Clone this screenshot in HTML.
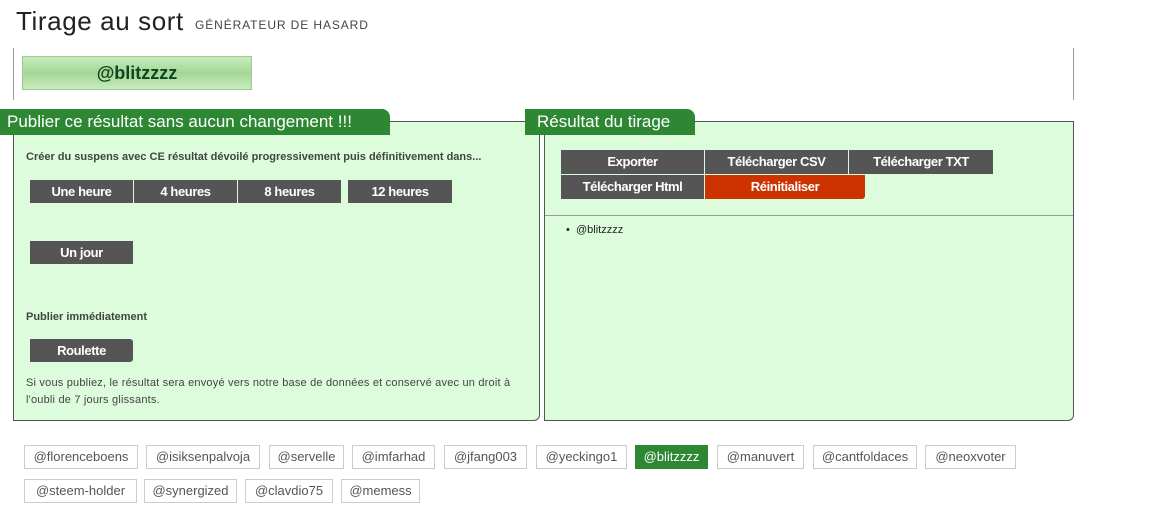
<!DOCTYPE html>
<html><head><meta charset="utf-8"><style>
*{box-sizing:border-box;margin:0;padding:0}
body{width:1163px;height:509px;background:#fff;position:relative;font-family:"Liberation Sans",sans-serif;overflow:hidden}
.a{position:absolute}
.btn{position:absolute;background:#555;color:#fff;font-size:13px;font-weight:bold;letter-spacing:-0.4px;text-align:center;line-height:23px;height:23px}
.tab{position:absolute;background:#2e8833;color:#fff;font-size:17px;line-height:26px;height:26px;padding-left:7px;border-radius:0 8px 0 0}
.box{position:absolute;background:#dcfcdc;border:1px solid #555;border-radius:0 0 6px 0}
.t{position:absolute;font-size:11px;color:#444}
.tag{position:absolute;height:24px;border:1px solid #ccc;font-size:13px;color:#555;text-align:center;line-height:22px;background:#fff}
</style></head><body>
<div class="a" style="left:16px;top:6px;font-size:26px;color:#222;letter-spacing:0.6px">Tirage au sort</div>
<div class="a" style="left:195px;top:18px;font-size:12px;color:#444;letter-spacing:0.9px">GÉNÉRATEUR DE HASARD</div>
<div class="a" style="left:13px;top:48px;width:1px;height:52px;background:#999"></div>
<div class="a" style="left:1073px;top:48px;width:1px;height:52px;background:#999"></div>
<div class="a" style="left:22px;top:56px;width:230px;height:34px;background:linear-gradient(#c8ecbc,#a4d696,#c8ecbc);border:1px solid #9c9;text-align:center;font-weight:bold;font-size:18px;line-height:32px;color:#142">@blitzzzz</div>

<div class="box" style="left:13px;top:121px;width:527px;height:300px"></div>
<div class="tab" style="left:0;top:109px;width:390px">Publier ce résultat sans aucun changement !!!</div>
<div class="a" style="left:389px;top:121px;width:140px;height:1px;background:#555"></div>
<div class="t" style="left:26px;top:151px;font-weight:bold">Créer du suspens avec CE résultat dévoilé progressivement puis définitivement dans...</div>
<div class="btn" style="left:30px;top:180px;width:103px">Une heure</div>
<div class="btn" style="left:134px;top:180px;width:103px">4 heures</div>
<div class="btn" style="left:238px;top:180px;width:103px">8 heures</div>
<div class="btn" style="left:348px;top:180px;width:104px">12 heures</div>
<div class="btn" style="left:30px;top:241px;width:103px">Un jour</div>
<div class="t" style="left:26px;top:311px;font-weight:bold">Publier immédiatement</div>
<div class="btn" style="left:30px;top:339px;width:103px;border-radius:0 3px 3px 0">Roulette</div>
<div class="t" style="left:26px;top:375px;width:510px;line-height:17px;letter-spacing:0.2px">Si vous publiez, le résultat sera envoyé vers notre base de données et conservé avec un droit à l'oubli de 7 jours glissants.</div>

<div class="box" style="left:544px;top:121px;width:530px;height:300px"></div>
<div class="tab" style="left:525px;top:109px;width:170px;padding-left:12px">Résultat du tirage</div>
<div class="btn" style="left:561px;top:150px;width:143px;height:24px;line-height:24px">Exporter</div>
<div class="btn" style="left:705px;top:150px;width:143px;height:24px;line-height:24px">Télécharger CSV</div>
<div class="btn" style="left:849px;top:150px;width:144px;height:24px;line-height:24px">Télécharger TXT</div>
<div class="btn" style="left:561px;top:175px;width:143px;height:24px;line-height:24px">Télécharger Html</div>
<div class="btn" style="left:705px;top:175px;width:160px;height:24px;line-height:24px;background:#cc3300;border-radius:0 0 3px 0">Réinitialiser</div>
<div class="a" style="left:545px;top:215px;width:528px;height:1px;background:#999"></div>
<div class="a" style="left:566px;top:224px;font-size:11px;color:#222">•&nbsp;&nbsp;@blitzzzz</div>

<div class="tag" style="left:24px;top:445px;width:114px">@florenceboens</div>
<div class="tag" style="left:146px;top:445px;width:114px">@isiksenpalvoja</div>
<div class="tag" style="left:269px;top:445px;width:75px">@servelle</div>
<div class="tag" style="left:352px;top:445px;width:83px">@imfarhad</div>
<div class="tag" style="left:444px;top:445px;width:83px">@jfang003</div>
<div class="tag" style="left:536px;top:445px;width:91px">@yeckingo1</div>
<div class="tag" style="left:635px;top:445px;width:73px;background:#2e8833;color:#fff;border-color:#2e8833">@blitzzzz</div>
<div class="tag" style="left:717px;top:445px;width:87px">@manuvert</div>
<div class="tag" style="left:813px;top:445px;width:104px">@cantfoldaces</div>
<div class="tag" style="left:925px;top:445px;width:91px">@neoxvoter</div>
<div class="tag" style="left:24px;top:479px;width:113px">@steem-holder</div>
<div class="tag" style="left:144px;top:479px;width:93px">@synergized</div>
<div class="tag" style="left:245px;top:479px;width:88px">@clavdio75</div>
<div class="tag" style="left:341px;top:479px;width:79px">@memess</div>
</body></html>
